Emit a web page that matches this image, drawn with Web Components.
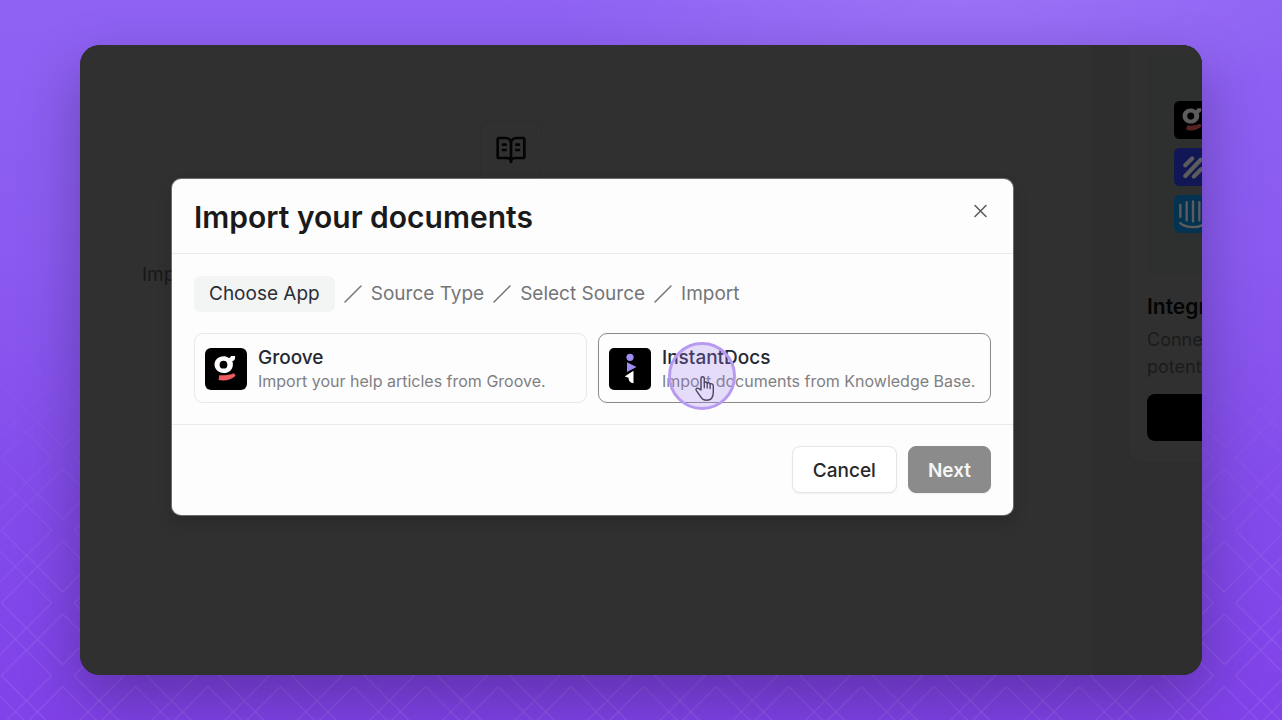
<!DOCTYPE html>
<html lang="en">
<head>
<meta charset="utf-8">
<meta name="viewport" content="width=device-width, initial-scale=1">
<title>Import your documents</title>
<style>
  body {
    margin: 0;
    font-family: Inter, "Liberation Sans", sans-serif;
    color: #1a1a1b;
  }
</style>
</head>
<body>
<import-stage>
  <docs-page>
    <app-icon name="groove" slot="apps"></app-icon>
    <app-icon name="helpscout" slot="apps"></app-icon>
    <app-icon name="intercom" slot="apps"></app-icon>
  </docs-page>
  <import-dialog slot="dialog" heading="Import your documents">
    <step-list slot="steps" steps="Choose App,Source Type,Select Source,Import"></step-list>
    <app-option name="groove">
      Groove
      <span slot="description">Import your help articles from Groove.</span>
    </app-option>
    <app-option name="instantdocs" selected>
      InstantDocs
      <span slot="description">Import documents from Knowledge Base.</span>
    </app-option>
    <app-button slot="actions">Cancel</app-button>
    <app-button slot="actions" primary>Next</app-button>
  </import-dialog>
  <click-pointer slot="pointer"></click-pointer>
</import-stage>

<script>
const icons = {
  groove: `
    <rect width="42" height="42" rx="6" fill="#000"/>
    <path fill="#fff" fill-rule="evenodd" d="M18.5 8.2c2 0 3.9.6 5.3 1.7 1.3 0 1.8-.9 2.1-2h4.2v2.2c-.1 1.6-1 2.8-2.8 3 .4 1 .6 2.1.6 3.3 0 5.1-4 8.6-9.2 8.6s-9.2-3.6-9.2-8.4 3.8-8.4 9-8.4zM18.5 12.8a3.9 3.9 0 1 0 0 7.8 3.9 3.9 0 0 0 0-7.8z"/>
    <path fill="#ee5c62" d="M14.2 27.2c5.4.4 10.6-.2 14.8-2l1.6 2.6c-4 3.9-10.8 5.6-17 4.2z"/>`,
  instantdocs: `
    <rect width="42" height="42" rx="5" fill="#000"/>
    <circle cx="21" cy="9.3" r="3.6" fill="#a08cf0"/>
    <path fill="#a08cf0" d="M18 14.2l9.5 4.8-9.5 5z"/>
    <path fill="#fff" d="M24.5 22.7v12.5c-3.3-.2-5-2.2-5-5.4l-3.8-1.4z"/>`,
  helpscout: `
    <rect width="42" height="42" rx="6" fill="#3040e8"/>
    <g stroke="#fff" stroke-width="4.6" stroke-linecap="round">
      <path d="M12.5 19L20 11.5M12.5 31L29.5 13M22 31.5L30 23.5"/>
    </g>`,
  intercom: `
    <rect width="42" height="42" rx="6" fill="#0a8fe0"/>
    <g fill="none" stroke="#fff" stroke-width="2.6" stroke-linecap="round">
      <path d="M7 11v13M14 8v20M21 7v22M28 8v20M35 11v13M7 31c7 6 21 6 28 0"/>
    </g>`
};

class ImportStage extends HTMLElement {
  constructor() {
    super();
    this.attachShadow({ mode: 'open' }).innerHTML = `
      <style>
        :host {
          display: flex;
          box-sizing: border-box;
          min-height: 100vh;
          padding: 45px 80px;
          position: relative;
          overflow: hidden;
          background:
            radial-gradient(ellipse 420px 110px at 75% 0, rgba(255, 255, 255, 0.1), transparent),
            linear-gradient(#8f62f4, #8b5af1 35%, #824bea 70%, #8042e9);
        }
        .pattern {
          position: absolute;
          inset: 0;
          width: 100%;
          height: 100%;
          -webkit-mask-image: linear-gradient(transparent 42%, #000 90%);
          mask-image: linear-gradient(transparent 42%, #000 90%);
        }
        .window {
          flex: 1;
          display: flex;
          position: relative;
          overflow: hidden;
          border-radius: 20px;
          background: #303030;
          box-shadow: 0 24px 60px rgba(0, 0, 0, 0.27);
        }
        .overlay {
          position: absolute;
          inset: 0;
          padding: 134px 189px 0 92px;
        }
      </style>
      <svg class="pattern" aria-hidden="true">
        <defs>
          <pattern id="lattice" width="72.6" height="72.6" x="1.4" y="22.1" patternUnits="userSpaceOnUse">
            <path fill="none" stroke="#fff" stroke-opacity="0.12" d="
              M61.4-61.6L0 0L61.4 61.6L122.8 0L61.4-61.6
              M-11.2-61.6L-72.6 0L-11.2 61.6L50.2 0L-11.2-61.6
              M61.4 11L0 72.6L61.4 134.2L122.8 72.6L61.4 11
              M-11.2 11L-72.6 72.6L-11.2 134.2L50.2 72.6L-11.2 11"/>
          </pattern>
        </defs>
        <rect width="100%" height="100%" fill="url(#lattice)"/>
      </svg>
      <div class="window">
        <slot></slot>
        <div class="overlay"><slot name="dialog"></slot></div>
        <slot name="pointer"></slot>
      </div>
    `;
  }
}

class AppIcon extends HTMLElement {
  connectedCallback() {
    const root = this.shadowRoot || this.attachShadow({ mode: 'open' });
    root.innerHTML = `
      <style>
        :host {
          display: block;
          flex: none;
          width: var(--icon-size, 42px);
          height: var(--icon-size, 42px);
        }
        svg {
          display: block;
          width: 100%;
          height: 100%;
        }
      </style>
      <svg viewBox="0 0 42 42" aria-hidden="true">${icons[this.getAttribute('name')]}</svg>
    `;
  }
}

// The page behind the dialog, in its dimmed colours
class DocsPage extends HTMLElement {
  constructor() {
    super();
    this.attachShadow({ mode: 'open' }).innerHTML = `
      <style>
        :host {
          flex: 1;
          min-width: 0;
          display: flex;
          background: #303030;
        }
        main {
          flex: 1;
          min-width: 0;
          margin-right: 32px;
          padding: 76px 0 0 62px;
          font-size: 19px;
          line-height: 28px;
          color: #181818;
        }
        .book {
          display: flex;
          align-items: center;
          justify-content: center;
          width: 60px;
          height: 56px;
          margin: 0 0 82px 338px;
          border: 1px solid #2d2d2d;
          border-radius: 8px;
        }
        .book svg {
          display: block;
          color: #040404;
        }
        p {
          margin: 0;
        }
        aside {
          flex: none;
          width: 110px;
          overflow: hidden;
          background: #2e2e2e;
        }
        .card {
          width: 360px;
          margin-left: 36px;
          padding: 10px 18px 21px;
          box-sizing: border-box;
          border: 1px solid #2d2d2d;
          border-top: 0;
          border-radius: 0 0 14px 14px;
          background: #303030;
          color: #1b1b1b;
          font-size: 18px;
          line-height: 27px;
        }
        .apps {
          --icon-size: 38px;
          display: flex;
          flex-direction: column;
          gap: 9px;
          padding: 46px 27px 42px;
          border-radius: 8px;
          background: #2d302f;
        }
        ::slotted(app-icon) {
          filter: brightness(0.36);
        }
        h2 {
          margin: 18px 0 5px;
          font-size: 21px;
          line-height: 28px;
          font-weight: 600;
          color: #040404;
        }
        button {
          display: block;
          width: 100%;
          height: 47px;
          margin-top: 14px;
          border: 0;
          border-radius: 8px;
          background: #000;
        }
      </style>
      <main>
        <div class="book">
          <svg width="32" height="32" viewBox="0 0 24 24" fill="none" stroke="currentColor" stroke-width="2" stroke-linecap="round" stroke-linejoin="round" aria-hidden="true">
            <path d="M12 6v15M3 18a1 1 0 0 1-1-1V4a1 1 0 0 1 1-1h5a4 4 0 0 1 4 4 4 4 0 0 1 4-4h5a1 1 0 0 1 1 1v13a1 1 0 0 1-1 1h-6a3 3 0 0 0-3 3 3 3 0 0 0-3-3zM6 8h2M6 12h2M16 8h2M16 12h2"/>
          </svg>
        </div>
        <p>Imp</p>
      </main>
      <aside>
        <div class="card">
          <div class="apps"><slot name="apps"></slot></div>
          <h2>Integr</h2>
          <p>Conne<br>potent</p>
          <button type="button" aria-label="Connect"></button>
        </div>
      </aside>
    `;
  }
}

class ImportDialog extends HTMLElement {
  connectedCallback() {
    const root = this.shadowRoot || this.attachShadow({ mode: 'open' });
    root.innerHTML = `
      <style>
        :host {
          display: block;
          border-radius: 9px;
          background: #fdfdfd;
          box-shadow: 0 0 0 1px rgba(255, 255, 255, 0.3), 0 8px 16px rgba(0, 0, 0, 0.15);
        }
        header {
          display: flex;
          align-items: flex-start;
          justify-content: space-between;
          padding: 18px 22px 16px;
          border-bottom: 1px solid #ebebeb;
        }
        h1 {
          margin: 0;
          font-size: 30px;
          line-height: 40px;
          font-weight: 600;
        }
        .close {
          display: flex;
          margin: 4px 0 0;
          padding: 0;
          border: 0;
          background: none;
          color: #5a5a5e;
        }
        .body {
          display: grid;
          gap: 21px;
          padding: 22px 22px 21px;
        }
        .options {
          display: grid;
          grid-template-columns: 1fr 1fr;
          gap: 11px;
        }
        footer {
          display: flex;
          justify-content: flex-end;
          gap: 11px;
          padding: 21px 22px 22px;
          border-top: 1px solid #ebebeb;
        }
      </style>
      <section role="dialog" aria-labelledby="title">
        <header>
          <h1 id="title">${this.getAttribute('heading')}</h1>
          <button class="close" type="button" aria-label="Close">
            <svg width="21" height="21" viewBox="0 0 21 21" fill="none" stroke="currentColor" stroke-width="1.5" stroke-linecap="round">
              <path d="M5 4.5l11 11M16 4.5l-11 11"/>
            </svg>
          </button>
        </header>
        <div class="body">
          <slot name="steps"></slot>
          <div class="options"><slot></slot></div>
        </div>
        <footer><slot name="actions"></slot></footer>
      </section>
    `;
  }
}

class StepList extends HTMLElement {
  connectedCallback() {
    const root = this.shadowRoot || this.attachShadow({ mode: 'open' });
    const steps = this.getAttribute('steps').split(',');
    const slash = `
      <svg width="18" height="18" viewBox="0 0 18 18" fill="none" stroke="currentColor" stroke-width="1.5" stroke-linecap="round" aria-hidden="true">
        <path d="M1 17L17 1"/>
      </svg>`;
    root.innerHTML = `
      <style>
        :host {
          display: block;
        }
        ol {
          display: flex;
          margin: 0;
          padding: 0;
          list-style: none;
          font-size: 19px;
          line-height: 36px;
          color: #757578;
        }
        li {
          display: flex;
          align-items: center;
        }
        svg {
          margin: 0 9px;
        }
        a {
          color: inherit;
          text-decoration: none;
        }
        a[aria-current] {
          padding: 0 15px;
          border-radius: 7px;
          background: #f3f4f4;
          color: #2b2d36;
        }
      </style>
      <nav aria-label="Steps">
        <ol>
          ${steps
            .map((s, i) => `<li>${i ? slash : ''}<a href="#step-${i + 1}"${i ? '' : ' aria-current="step"'}>${s}</a></li>`)
            .join('')}
        </ol>
      </nav>
    `;
  }
}

class AppOption extends HTMLElement {
  connectedCallback() {
    const root = this.shadowRoot || this.attachShadow({ mode: 'open' });
    root.innerHTML = `
      <style>
        :host {
          display: block;
        }
        button {
          display: flex;
          align-items: center;
          gap: 11px;
          box-sizing: border-box;
          width: 100%;
          min-height: 70px;
          padding: 12px 10px 10px;
          border: 1px solid #e8e8ea;
          border-radius: 9px;
          background: none;
          font: inherit;
          color: inherit;
          text-align: left;
        }
        :host([selected]) button {
          border-color: #8a8a8a;
        }
        .text {
          display: grid;
        }
        .name {
          font-size: 19px;
          line-height: 24px;
          font-weight: 500;
          color: #262833;
        }
        .description {
          font-size: 16px;
          line-height: 22px;
          color: #808083;
        }
      </style>
      <button type="button" aria-pressed="${this.hasAttribute('selected')}">
        <app-icon name="${this.getAttribute('name')}"></app-icon>
        <span class="text">
          <span class="name"><slot></slot></span>
          <span class="description"><slot name="description"></slot></span>
        </span>
      </button>
    `;
  }
}

class AppButton extends HTMLElement {
  constructor() {
    super();
    this.attachShadow({ mode: 'open' }).innerHTML = `
      <style>
        :host {
          display: block;
        }
        button {
          display: block;
          padding: 11px 20px 9px;
          border: 1px solid #e6e6e8;
          border-radius: 8px;
          background: #fff;
          box-shadow: 0 1px 2px rgba(0, 0, 0, 0.06);
          font: 500 19px/25px Inter, "Liberation Sans", sans-serif;
          color: #27272a;
        }
        :host([primary]) button {
          padding: 11px 19px 9px;
          border-color: #8a8b8a;
          background: #8a8b8a;
          font-weight: 600;
          color: #f6f6f6;
        }
      </style>
      <button type="button"><slot></slot></button>
    `;
  }
}

// Highlight ring with the hand cursor, drawn over everything else
class ClickPointer extends HTMLElement {
  constructor() {
    super();
    this.attachShadow({ mode: 'open' }).innerHTML = `
      <style>
        :host {
          position: absolute;
          left: 588px;
          top: 297px;
          width: 68px;
          height: 68px;
        }
        svg {
          display: block;
        }
      </style>
      <svg width="68" height="68" viewBox="0 0 68 68" fill="none" aria-hidden="true">
        <circle cx="34" cy="34" r="32.5" fill="#a17cf3" fill-opacity="0.25" stroke="#b79bf0" stroke-width="3"/>
        <path fill="#e5dafb" stroke="#4a4560" stroke-width="1.4" stroke-linejoin="round" stroke-linecap="round"
          d="M33 48V36.5c0-2.3 3.3-2.3 3.3 0v4.3c.6-1.2 2.6-1 2.9.5.7-1 2.6-.7 2.9.8.8-.9 3.2-.5 3.2 1.8v6.3c0 4.6-2.2 8-6.7 8-3.2 0-4.8-1.3-6.2-3.9l-4.1-5.7c-1.2-2 1.2-3.2 2.6-1.9z"/>
        <path stroke="#4a4560" stroke-width="1.3" stroke-linecap="round" d="M36.3 40.8v5M39.2 41.5v4.5M42.1 42.5v4"/>
      </svg>
    `;
  }
}

customElements.define('import-stage', ImportStage);
customElements.define('app-icon', AppIcon);
customElements.define('docs-page', DocsPage);
customElements.define('import-dialog', ImportDialog);
customElements.define('step-list', StepList);
customElements.define('app-option', AppOption);
customElements.define('app-button', AppButton);
customElements.define('click-pointer', ClickPointer);
</script>
</body>
</html>
